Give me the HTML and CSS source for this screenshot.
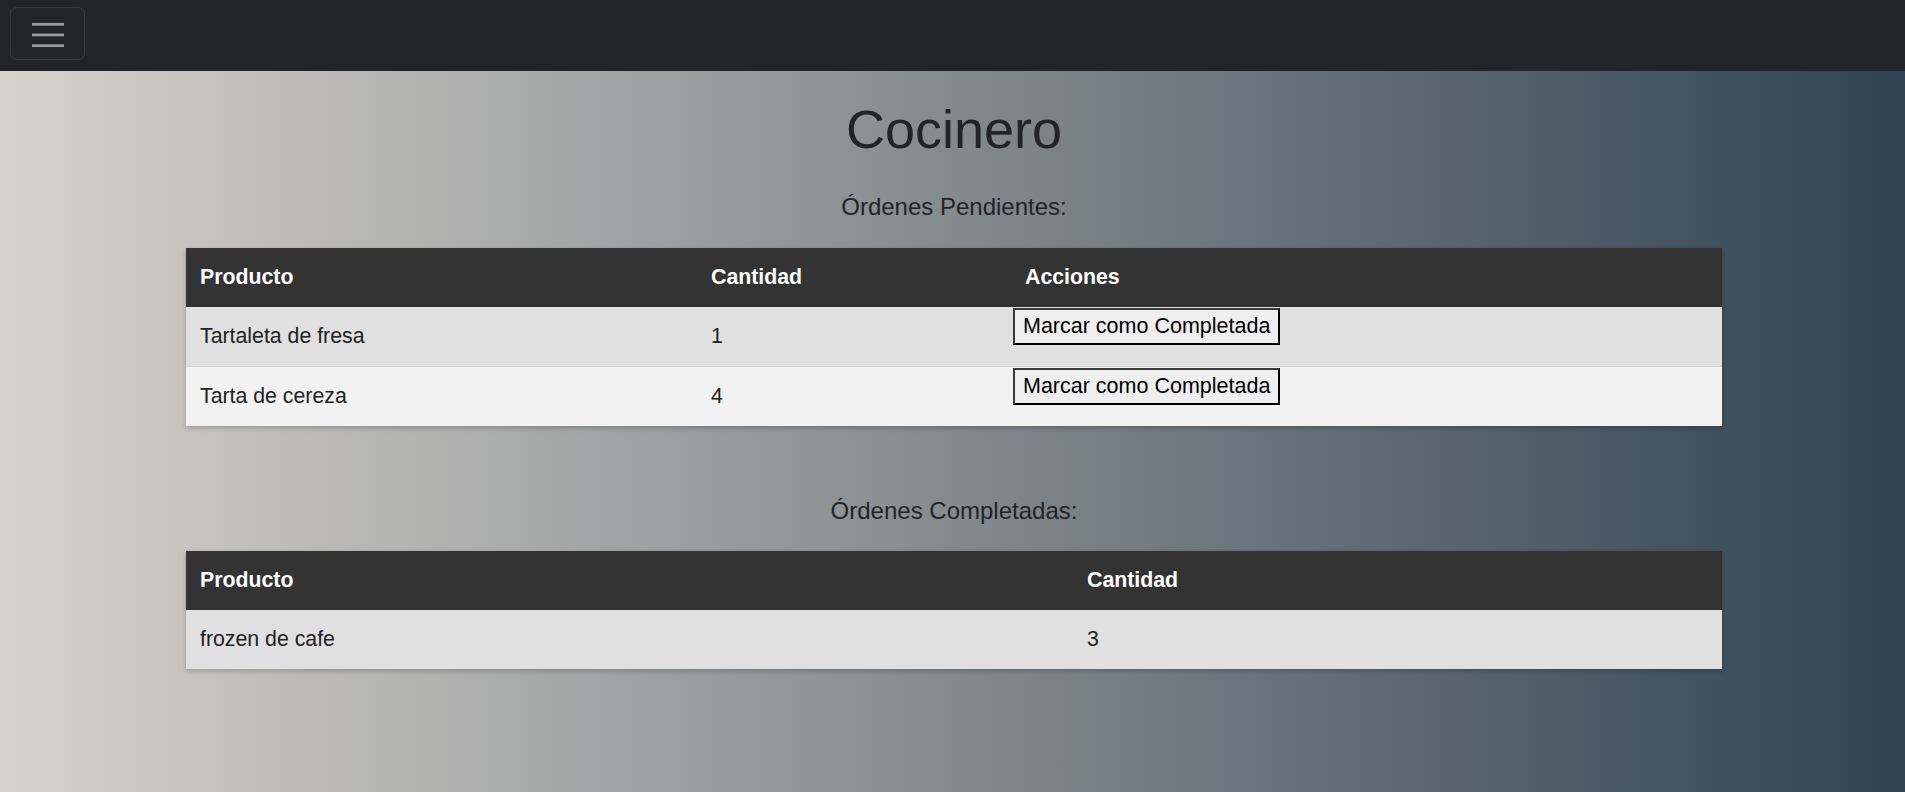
FILE: index.html
```html
<!DOCTYPE html>
<html lang="es">
<head>
<meta charset="utf-8">
<title>Cocinero</title>
<link rel="stylesheet" href="styles.css">
</head>
<body>
<nav class="navbar">
  <button class="toggler" type="button" aria-label="Menú">
    <svg class="toggler-icon" width="32" height="26" viewBox="0 0 32 26">
      <rect x="0" y="1.9" width="32" height="2.7" fill="rgba(255,255,255,0.55)"/>
      <rect x="0" y="12.6" width="32" height="2.7" fill="rgba(255,255,255,0.55)"/>
      <rect x="0" y="23.3" width="32" height="2.7" fill="rgba(255,255,255,0.55)"/>
    </svg>
  </button>
</nav>
<main class="content">
  <h1 class="title">Cocinero</h1>

  <h2 class="section-title">Órdenes Pendientes:</h2>
  <table class="orders">
    <colgroup>
      <col class="c-pend-prod">
      <col class="c-pend-cant">
      <col>
    </colgroup>
    <thead>
      <tr><th>Producto</th><th>Cantidad</th><th>Acciones</th></tr>
    </thead>
    <tbody>
      <tr class="odd">
        <td>Tartaleta de fresa</td><td>1</td>
        <td class="actions"><button class="complete-btn" type="button">Marcar como Completada</button></td>
      </tr>
      <tr class="even">
        <td>Tarta de cereza</td><td>4</td>
        <td class="actions"><button class="complete-btn" type="button">Marcar como Completada</button></td>
      </tr>
    </tbody>
  </table>

  <h2 class="section-title second">Órdenes Completadas:</h2>
  <table class="orders">
    <colgroup>
      <col class="c-comp-prod">
      <col>
    </colgroup>
    <thead>
      <tr><th>Producto</th><th>Cantidad</th></tr>
    </thead>
    <tbody>
      <tr class="odd">
        <td>frozen de cafe</td><td>3</td>
      </tr>
    </tbody>
  </table>
</main>
</body>
</html>
```

FILE: styles.css
```css
html, body {
  margin: 0;
  padding: 0;
}

body {
  min-height: 100vh;
  font-family: "Liberation Sans", Arial, sans-serif;
  color: #212529;
  background: linear-gradient(to right, #d7d2cc, #304352);
}

.navbar {
  height: 71px;
  box-sizing: border-box;
  padding: 7px 10px 0;
  background: #212529;
  display: flex;
  align-items: flex-start;
}

.toggler {
  width: 75px;
  height: 53px;
  box-sizing: border-box;
  padding: 0;
  margin: 0;
  background: transparent;
  border: 1px solid rgba(255, 255, 255, 0.1);
  border-radius: 7px;
  display: flex;
  align-items: center;
  justify-content: center;
  cursor: pointer;
}

.toggler-icon {
  display: block;
  margin-top: 1px;
}

.content {
  display: flex;
  flex-direction: column;
  align-items: center;
  padding: 0 0 40px 3px;
}

.title {
  margin: 26px 0 0;
  font-size: 54px;
  font-weight: 400;
  line-height: 1.2;
  color: #212529;
}

.section-title {
  margin: 31px 0 0;
  font-size: 24px;
  font-weight: 400;
  line-height: 1.2;
  color: #212529;
}

.section-title.second {
  margin-top: 71px;
}

.orders {
  width: 1536px;
  margin-top: 26px;
  border-collapse: collapse;
  table-layout: fixed;
  font-size: 21.3px;
  box-shadow: 0 2px 5px rgba(0, 0, 0, 0.22);
}

.c-pend-prod { width: 511px; }
.c-pend-cant { width: 314px; }
.c-comp-prod { width: 887px; }

.orders th,
.orders td {
  padding: 14px 14px;
  line-height: 31px;
  text-align: left;
  vertical-align: middle;
}

.orders th {
  background: #333333;
  color: #ffffff;
  font-weight: 700;
}

.orders td {
  color: #222222;
}

.orders tbody tr {
  border-bottom: 1px solid #cfcfcf;
}

.orders tbody tr:last-child {
  border-bottom: 0;
}

.orders tr.odd td {
  background: #e0e0e0;
}

.orders tr.even td {
  background: #f2f2f2;
}

.orders td.actions {
  padding: 1px 2px 0;
  vertical-align: top;
}

.complete-btn {
  display: block;
  margin: 0;
  padding: 4px 8px;
  font-family: "Liberation Sans", Arial, sans-serif;
  font-size: 21.5px;
  line-height: 25px;
  color: #000000;
  background: #efefef;
  border: 2px solid;
  border-color: #3a3a3a #000000 #000000 #3a3a3a;
  border-radius: 0;
  cursor: pointer;
  white-space: nowrap;
}
```
